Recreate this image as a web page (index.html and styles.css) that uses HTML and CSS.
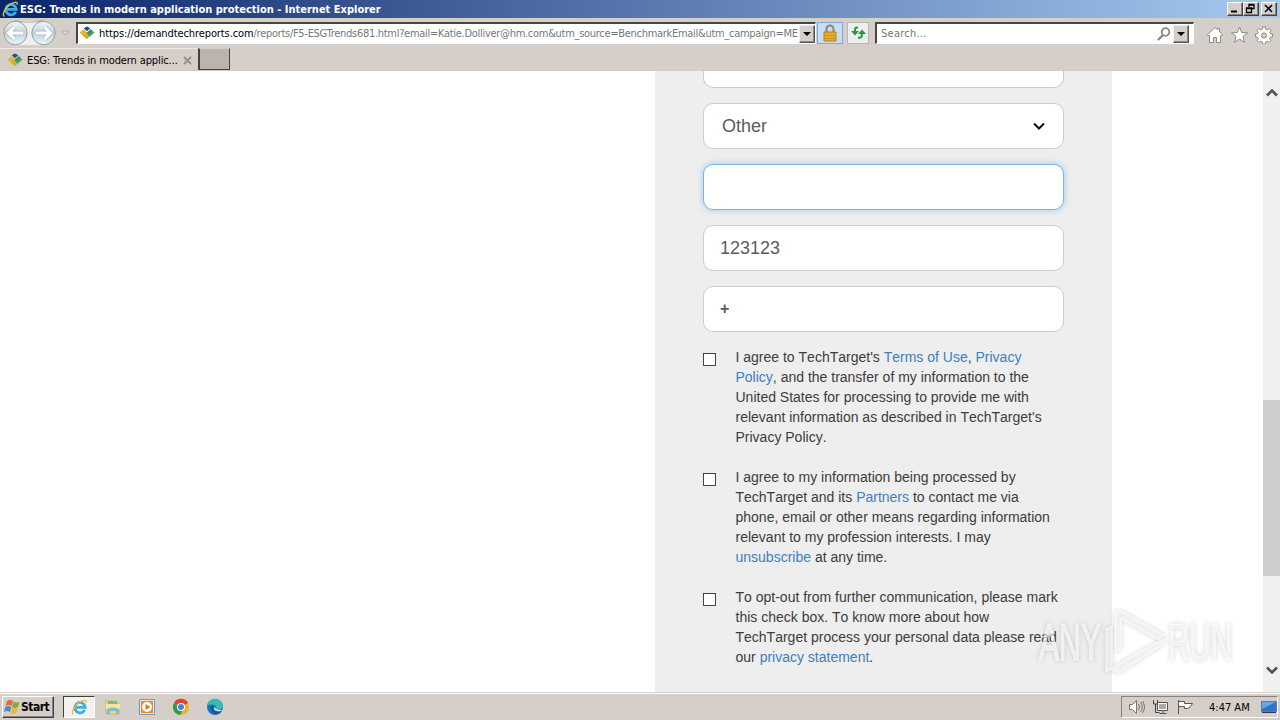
FILE: index.html
```html
<!DOCTYPE html>
<html lang="en">
<head>
    <meta charset="UTF-8">
    <title>ESG: Trends in modern application protection</title>
    <link rel="stylesheet" href="styles.css">
</head>
<body>
    <svg class="symbols" width="0" height="0">
        <symbol id="ie" viewBox="0 0 18 18">
            <path d="M14.5 11.5A5.5 5.5 0 1 1 15 8.8H5" fill="none" stroke="#3daeea" stroke-width="3"/>
            <path d="M2.5 16.2C-.5 15 3 7.500 8 4C12 1 17 0 16 4" fill="none" stroke="#f0c02d" stroke-width="1.4"/>
        </symbol>
        <symbol id="favicon" viewBox="0 0 16 16">
            <path d="M0 7l4.500-3.500L9 8l-4 3.500z" fill="#e4b32c"/>
            <path d="M3.500 10.500L8 8l3.500 2.500L8 14z" fill="#c9b12d"/>
            <path d="M7.500 7.500L12 3.500 16 7l-5 4.500z" fill="#4f9f5c"/>
            <path d="M7.500 7.500L12 3.500l1.500 1.500-3.500 4z" fill="#2f8a8e"/>
            <path d="M4.500 2.500L8 .5l3.500 2L8 5.500z" fill="#294d7a"/>
        </symbol>
    </svg>

    <div class="title-bar">
        <svg class="title-icon"><use href="#ie"/></svg>
        <span class="title-text">ESG: Trends in modern application protection - Internet Explorer</span>
        <div class="window-buttons">
            <div class="window-button"><svg width="13" height="11"><path d="M3 8.500h6" stroke="#000" stroke-width="2"/></svg></div>
            <div class="window-button"><svg width="13" height="11"><path d="M5 4V1.500h5v4H8M5 2h5M2.500 5.500h5v4h-5zM2 5h6" fill="none" stroke="#000" stroke-width="1.300"/></svg></div>
            <div class="window-button close"><svg width="13" height="11"><path d="M3 2l7 7M10 2l-7 7" stroke="#000" stroke-width="1.600"/></svg></div>
        </div>
    </div>

    <div class="toolbar">
        <svg class="nav-buttons" width="72" height="28" viewBox="0 0 72 28">
            <defs>
                <linearGradient id="nav-fill" x2="0" y2="1">
                    <stop offset="0" stop-color="#f6f8fa"/>
                    <stop offset=".5" stop-color="#c3d0da"/>
                    <stop offset="1" stop-color="#e6f8ff"/>
                </linearGradient>
            </defs>
            <path d="M15 3h28v24H15z" fill="#f1f0ef"/>
            <path d="M15 2.500Q29 6 43 2.500" fill="none" stroke="#aaa9a6"/>
            <circle cx="15.500" cy="15" r="11.700" fill="url(#nav-fill)" stroke="#93a1ab"/>
            <circle cx="43.500" cy="15" r="11.700" fill="url(#nav-fill)" stroke="#93a1ab"/>
            <path d="M23 15H9M14.500 9L8.500 15l6 6M36 15h14M44.500 9l6 6-6 6" fill="none" stroke="#a3b4c0" stroke-width="4.600"/>
            <path d="M23 15H9M14.500 9L8.500 15l6 6M36 15h14M44.500 9l6 6-6 6" fill="none" stroke="#fff" stroke-width="3.200"/>
            <path d="M61.500 13h8l-4 4z" fill="#dcd6d0" stroke="#b5afa8"/>
        </svg>
        <div class="address">
            <svg class="favicon"><use href="#favicon"/></svg>
            <div class="url">https://<b>demandtechreports.com</b><span>/reports/F5-ESGTrends681.html?email=Katie.Dolliver@hm.com&amp;utm_source=BenchmarkEmail&amp;utm_campaign=ME</span></div>
            <div class="drop"></div>
        </div>
        <div class="tool lock">
            <svg width="16" height="18" viewBox="0 0 16 18">
                <path d="M4.500 9V5a3.500 3.500 0 0 1 7 0v4" fill="none" stroke="#8f8860" stroke-width="2"/>
                <path d="M2 8h12v9H2z" fill="#e5ad2d" stroke="#b77f18"/>
                <path d="M2 11.500h12M2 14.500h12" stroke="#cf9420"/>
            </svg>
        </div>
        <div class="tool refresh">
            <svg width="16" height="16" viewBox="0 0 16 16">
                <path d="M8 2.500Q5 2 5 5v2M8 12.500q4 1 4-3v-1" fill="none" stroke="#28973a" stroke-width="2"/>
                <path d="M1 6h8l-4 4.500zM8 9h8l-4-4.500z" fill="#28973a"/>
            </svg>
        </div>
        <div class="search">
            <span class="search-text">Search...</span>
            <svg width="14" height="14" viewBox="0 0 14 14"><circle cx="8.500" cy="5" r="3.800" fill="#fff" stroke="#888" stroke-width="1.800"/><path d="M6 8l-5 5" stroke="#888" stroke-width="2.400"/></svg>
            <div class="drop"></div>
        </div>
        <svg class="commands" width="70" height="20" viewBox="0 0 70 20" fill="#fff" stroke="#8d8a84" stroke-width="1">
            <path d="M1.500 10.500L9 3.500l2.500 2v-1h2v3l3 3-1 1.500-1-1V18.500h-4v-5h-3v5h-4V11l-1 1z"/>
            <path d="M33.500 3l2.200 5.500 5.800.3-4.500 3.700 1.500 5.800-5-3.200-5 3.200 1.500-5.800-4.500-3.700 5.800-.3z"/>
            <path d="M56.600 3h2.800l.4 2.200 1.300.6 2-1.300 1.900 1.900-1.300 2 .6 1.300 2.200.4v2.800l-2.200.4-.6 1.300 1.300 2-1.900 1.900-2-1.300-1.300.6-.4 2.200h-2.800l-.4-2.200-1.300-.6-2 1.300-1.900-1.900 1.300-2-.6-1.300-2.200-.4v-2.800l2.200-.4.6-1.300-1.300-2 1.900-1.900 2 1.300 1.300-.6z"/>
            <circle cx="58" cy="11.500" r="2.600" fill="#d6cec8"/>
        </svg>
    </div>

    <div class="tabs">
        <div class="tab">
            <svg class="favicon"><use href="#favicon"/></svg>
            <span class="tab-text">ESG: Trends in modern applic...</span>
            <svg class="tab-close" width="9" height="9"><path d="M1 1l7 7M8 1L1 8" stroke="#969089" stroke-width="1.800"/></svg>
        </div>
        <div class="new-tab"></div>
    </div>

    <div class="page">
        <form class="panel">
            <div class="field field-cut"></div>
            <div class="field field-select">Other
                <svg width="12" height="8"><path d="M1 1.500l5 5 5-5" fill="none" stroke="#111" stroke-width="2"/></svg>
            </div>
            <div class="field field-focus"></div>
            <div class="field">123123</div>
            <div class="field field-phone">+</div>
            <div class="consent">
                <span class="checkbox"></span>
                <p>I agree to TechTarget's <a>Terms of Use</a>, <a>Privacy<br>Policy</a>, and the transfer of my information to the<br>United States for processing to provide me with<br>relevant information as described in TechTarget's<br>Privacy Policy.</p>
            </div>
            <div class="consent">
                <span class="checkbox"></span>
                <p>I agree to my information being processed by<br>TechTarget and its <a>Partners</a> to contact me via<br>phone, email or other means regarding information<br>relevant to my profession interests. I may<br><a>unsubscribe</a> at any time.</p>
            </div>
            <div class="consent">
                <span class="checkbox"></span>
                <p>To opt-out from further communication, please mark<br>this check box. To know more about how<br>TechTarget process your personal data please read<br>our <a>privacy statement</a>.</p>
            </div>
        </form>
        <div class="scrollbar">
            <svg width="12" height="9"><path d="M1 7.500l5-5 5 5" fill="none" stroke="#505050" stroke-width="2.600"/></svg>
            <div class="thumb"></div>
            <svg width="12" height="9"><path d="M1 1.500l5 5 5-5" fill="none" stroke="#505050" stroke-width="2.600"/></svg>
        </div>
        <svg class="watermark" width="216" height="74" viewBox="0 0 216 74">
            <g class="mark">
                <text x="7" y="52" textLength="62" lengthAdjust="spacingAndGlyphs">ANY</text>
                <text x="136" y="52" textLength="64" lengthAdjust="spacingAndGlyphs">RUN</text>
                <path d="M74 64V21l6-3v43zM83 44V4l5-2 44 25-5 5-38-21v30zM81 59l42-24 9-4v5L87 65l-6-3z"/>
            </g>
        </svg>
    </div>

    <div class="taskbar">
        <div class="start">
            <svg width="17" height="16" viewBox="0 0 17 16">
                <path d="M3 2q3-2 6 0L7.500 7q-3-2-6 0z" fill="#e66932"/>
                <path d="M9.500 2.500q3 2 6 0L14 8q-3 2-6 0z" fill="#7cae3d"/>
                <path d="M1.200 8q3-2 6 0L6 13q-3-2-6 0z" fill="#498bc6"/>
                <path d="M8 8.500q3 2 6 0L12.500 14q-3 2-6 0z" fill="#edba35"/>
            </svg>
            <span>Start</span>
        </div>
        <div class="task task-active"><svg class="task-ie"><use href="#ie"/></svg></div>
        <div class="task">
            <svg width="18" height="18" viewBox="0 0 18 18">
                <path d="M2 3h6l1 2h6v11H2z" fill="#efd780" stroke="#d6b957"/>
                <path d="M4 3h9v4H4z" fill="#77bd7e"/>
                <path d="M2 6h14v5H2z" fill="#f4e6a5"/>
                <path d="M3 16v-5q6-3 12 0v5h-3v-3H6v3z" fill="#78bfe2"/>
            </svg>
        </div>
        <div class="task">
            <svg width="18" height="18" viewBox="0 0 18 18">
                <path d="M1.500 1.500h15v15h-15z" fill="#d8e8f6" stroke="#6a9dcc"/>
                <path d="M3 3h12v12H3z" fill="#f18a20"/>
                <circle cx="9" cy="9" r="5" fill="#fff"/><path d="M7.500 6l5 3-5 3z" fill="#e97512"/>
            </svg>
        </div>
        <div class="task">
            <svg width="18" height="18" viewBox="0 0 18 18">
                <circle cx="9" cy="9" r="8" fill="#e5b82e"/>
                <path d="M9 9L2 5a8 8 0 0 1 14 0z" fill="#dc4436"/>
                <path d="M9 9L2 5a8 8 0 0 0 6 12l4-7z" fill="#319b4b"/>
                <circle cx="9" cy="9" r="4" fill="#fff"/><circle cx="9" cy="9" r="3" fill="#4285d7"/>
            </svg>
        </div>
        <div class="task">
            <svg width="18" height="18" viewBox="0 0 18 18">
                <circle cx="9" cy="9" r="8" fill="#1478bd"/>
                <path d="M1 8C2-1 16-1 17 8c0 4-5 4-7 3 2-4-5-6-9-3z" fill="#37bdae"/>
                <path d="M8 8c-3 3 1 7 8 5-5 6-12 2-11-3 0-2 1-3 3-2z" fill="#15569f"/>
                <path d="M9 9q0 3 7 3l-1 1q-7 1-7-3z" fill="#ddd"/>
            </svg>
        </div>
        <div class="tray">
            <svg width="66" height="18" viewBox="0 0 66 18" fill="#fff" stroke="#77736f">
                <path d="M2.500 6.500h3l4-4v13l-4-4h-3z"/>
                <path d="M11.500 6q2 3 0 6M13.500 4q3.500 5 0 10M15.500 3q4 6 0 12" fill="none"/>
                <path d="M30.500 4.500h10v8h-10zM32.500 15.500h7M36 13v2" stroke="#555"/>
                <path d="M32 6h7v5h-7z" fill="#aaa" stroke="none"/>
                <path d="M26.500 2v4h4V2M28.500 6v8.500h4" fill="none" stroke="#444"/>
                <path d="M51.500 2v14M51.500 3.500h6v2h8l-2 3-3 2h-3v-2h-6" stroke="#555"/>
            </svg>
            <span class="clock">4:47 AM</span>
            <svg width="16" height="14" viewBox="0 0 16 14"><path d="M.5 1.500h15v10H.5z" fill="#2e74c9" stroke="#537aa8"/><path d="M1 2h14L1 9z" fill="#65a8e4"/><path d="M1 12.500h14" stroke="#263b5a"/></svg>
        </div>
    </div>
</body>
</html>
```

FILE: styles.css
```css
* {
    box-sizing: border-box;
}

body {
    margin: 0;
    width: 1280px;
    height: 720px;
    overflow: hidden;
    display: flex;
    flex-direction: column;
    background-color: #fff;
    font-family: "DejaVu Sans Condensed", "DejaVu Sans", sans-serif;
    font-stretch: condensed;
    font-size: 11px;
    color: #000;
}

svg {
    flex: none;
}

.symbols {
    display: none;
}

.title-bar {
    flex: none;
    height: 18px;
    display: flex;
    align-items: center;
    padding: 0 3px 0 2px;
    background: linear-gradient(to right, #0a246a, #a6caf0);
}

.title-icon {
    width: 17px;
    height: 17px;
}

.title-text {
    margin-left: 1px;
    color: #fff;
    font-weight: bold;
    white-space: nowrap;
}

.window-buttons {
    display: flex;
    margin-left: auto;
}

.window-button {
    width: 16px;
    height: 14px;
    background-color: #d6cec8;
    border: 1px solid;
    border-color: #fff #404040 #404040 #fff;
    box-shadow: inset -1px -1px #87827d;
}

.window-button svg {
    display: block;
}

.close {
    margin-left: 2px;
}

.toolbar {
    flex: none;
    height: 30px;
    display: flex;
    align-items: center;
    background-color: #d6cec8;
    border-top: 2px solid #d3d1c2;
}

.nav-buttons {
    margin-top: -4px;
}

.address,
.search {
    height: 22px;
    display: flex;
    align-items: center;
    background-color: #fff;
    border: 1px solid #fff;
    border-top: 2px solid #49434a;
    border-left: 2px solid #49434a;
    margin-top: -2px;
}

.address {
    width: 740px;
    margin-left: 4px;
}

.favicon {
    width: 16px;
    height: 15px;
}

.address .favicon {
    margin-left: 1px;
}

.url {
    flex: 1;
    min-width: 0;
    margin: 0 1px 0 4px;
    overflow: hidden;
    white-space: nowrap;
    letter-spacing: -0.1px;
}

.url b {
    font-weight: normal;
}

.url span,
.search-text {
    color: #777;
}

.url span {
    letter-spacing: -0.29px;
}

.drop {
    flex: none;
    width: 16px;
    height: 18px;
    background-color: #d6cec8;
    border: 1px solid;
    border-color: #eee #555 #555 #eee;
    box-shadow: inset -1px -1px #8c8781;
    display: flex;
    align-items: center;
    justify-content: center;
}

.drop::after {
    content: "";
    border: 4px solid transparent;
    border-top-color: #000;
    border-bottom: 0;
}

.tool {
    height: 22px;
    margin-top: -2px;
    display: flex;
    align-items: center;
    justify-content: center;
}

.lock {
    width: 26px;
    margin-left: 1px;
    background-color: #c8dcf4;
    border: 1px solid #7caade;
}

.refresh {
    width: 22px;
    margin-left: 4px;
    background-color: #eee;
    border: 1px solid #bbb5ae;
}

.search {
    width: 319px;
    margin-left: 6px;
    padding-right: 4px;
}

.search-text {
    margin-left: 4px;
    margin-right: auto;
    letter-spacing: 0.25px;
}

.search svg {
    margin-right: 2px;
}

.commands {
    margin-left: 12px;
}

.tabs {
    flex: none;
    height: 23px;
    display: flex;
    background-color: #d6cec8;
    border-bottom: 1px solid #d2ccc6;
}

.tab {
    width: 198px;
    display: flex;
    align-items: center;
    padding-left: 7px;
    padding-top: 2px;
    border-top: 1px solid #eee9e4;
}

.tab-text {
    width: 152px;
    margin-left: 4px;
    white-space: nowrap;
    letter-spacing: -0.12px;
}

.tab-close {
    margin-left: 4px;
}

.new-tab {
    width: 32px;
    height: 22px;
    background-color: #bbb3ad;
    border: 1px solid #45413e;
    border-left-width: 2px;
    border-top-color: #d6cec8;
}

.page {
    flex: 1;
    min-height: 0;
    position: relative;
    display: flex;
    justify-content: flex-end;
    font-family: "Liberation Sans", Arial, sans-serif;
}

.panel {
    width: 457px;
    margin: 0 151px 0 0;
    padding: 0 48px;
    background-color: #eee;
}

.field {
    height: 46px;
    margin-bottom: 15px;
    padding: 0 16px;
    background-color: #fff;
    border: 1px solid #ccc;
    border-radius: 10px;
    font-size: 18px;
    line-height: 44px;
    color: #5c5c5c;
}

.field-cut {
    height: 17px;
    border-top: 0;
    border-radius: 0 0 10px 10px;
}

.field-select {
    display: flex;
    align-items: center;
    justify-content: space-between;
    padding: 0 18px;
}

.field-focus {
    border-color: #7db4e0;
    box-shadow: 0 0 6px rgba(102, 175, 233, 0.6);
}

.field-phone {
    font-size: 16px;
    font-weight: bold;
}

.consent {
    display: flex;
    margin-bottom: 20px;
    font-size: 14px;
    line-height: 20px;
    color: #3c3c3c;
    font-kerning: none;
}

.consent p {
    margin: 0;
    white-space: nowrap;
}

.consent a {
    color: #3d80c0;
}

.checkbox {
    flex: none;
    width: 13px;
    height: 13px;
    margin: 6px 19.5px 0 0;
    background-color: #fff;
    border: 1px solid #444;
}

.scrollbar {
    width: 17px;
    display: flex;
    flex-direction: column;
    align-items: center;
    background-color: #f0f0f0;
    padding: 17px 0;
}

.thumb {
    width: 17px;
    height: 176px;
    margin-top: 303px;
    margin-bottom: auto;
    background-color: #cdcdcd;
}

/* sits over the panel and the page background */
.watermark {
    position: absolute;
    left: 1032px;
    top: 537px;
}

.mark {
    font-family: "Liberation Sans", Arial, sans-serif;
    font-size: 52px;
    fill: rgba(255, 255, 255, 0.6);
    stroke: rgba(255, 255, 255, 0.5);
    stroke-width: 1.5px;
    filter: drop-shadow(0 0 2px rgba(0, 0, 0, 0.25));
}

.taskbar {
    flex: none;
    height: 28px;
    display: flex;
    align-items: center;
    background-color: #d6cec8;
    border-top: 1px solid #d6cec8;
    box-shadow: inset 0 1px #fff;
    padding: 1px 2px 0;
}

.start {
    width: 52px;
    height: 22px;
    display: flex;
    align-items: center;
    padding-left: 1px;
    border: 1px solid;
    border-color: #fff #404040 #404040 #fff;
    box-shadow: inset -1px -1px #87827d;
    font-weight: bold;
    font-size: 12px;
}

.start span {
    letter-spacing: -0.5px;
}

.task {
    width: 32px;
    height: 22px;
    margin-right: 2px;
    display: flex;
    align-items: center;
    justify-content: center;
}

.task-active {
    margin-left: 9px;
    background-color: #f4f1ee;
    border: 1px solid;
    border-color: #404040 #fff #fff #404040;
}

.task-ie {
    width: 17px;
    height: 17px;
}

.tray {
    width: 157px;
    height: 22px;
    margin-left: auto;
    display: flex;
    align-items: center;
    border: 1px solid;
    border-color: #87827d #fff #fff #87827d;
    padding-left: 5px;
}

.clock {
    margin-left: 16px;
    margin-right: auto;
    white-space: nowrap;
}
```
